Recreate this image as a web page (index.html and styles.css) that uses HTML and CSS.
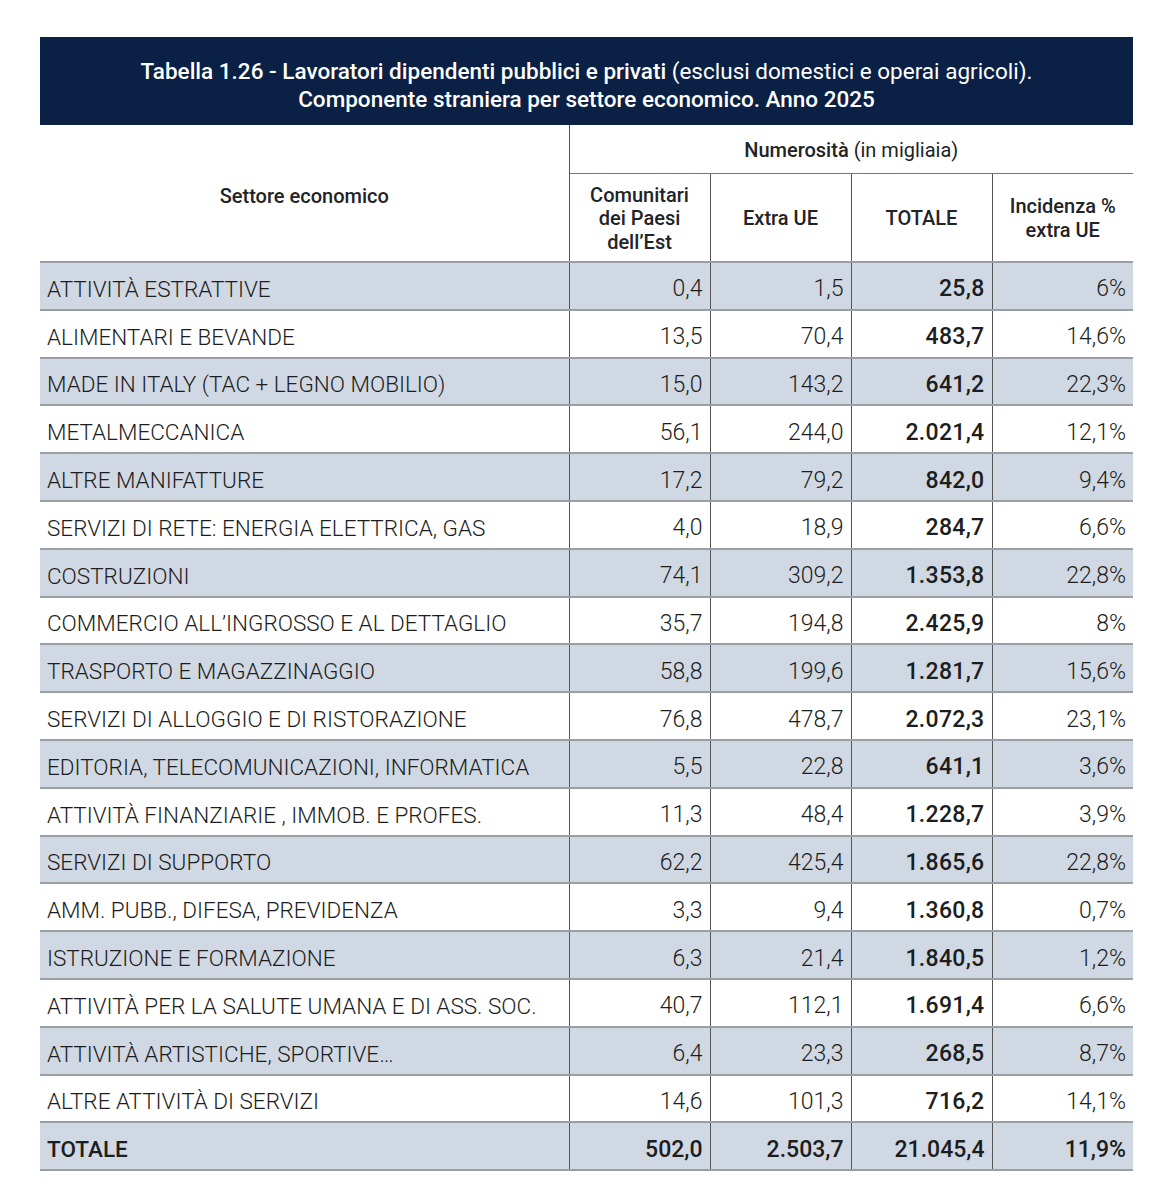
FILE: index.html
```html
<!DOCTYPE html>
<html lang="it">
<head>
  <meta charset="UTF-8" />
  <title>Tabella 1.26</title>
  <link rel="stylesheet" href="styles.css">
</head>
<body>
  <div class="page">
    <div class="caption">
      <div><b>Tabella 1.26 - Lavoratori dipendenti pubblici e privati</b> (esclusi domestici e operai agricoli).</div>
      <div><b>Componente straniera per settore economico. Anno 2025</b></div>
    </div>
    <table class="data">
      <colgroup>
        <col class="c-label">
        <col class="c-num">
        <col class="c-num">
        <col class="c-num">
        <col class="c-num">
      </colgroup>
      <thead>
        <tr class="head-top">
          <th rowspan="2" class="settore">Settore economico</th>
          <th colspan="4" class="group"><b>Numerosità</b> (in migliaia)</th>
        </tr>
        <tr class="head-sub">
          <th>Comunitari<br>dei Paesi<br>dell’Est</th>
          <th>Extra UE</th>
          <th>TOTALE</th>
          <th>Incidenza %<br>extra UE</th>
        </tr>
      </thead>
      <tbody>
        <tr><td>ATTIVITÀ ESTRATTIVE</td><td>0,4</td><td>1,5</td><td class="tot">25,8</td><td>6%</td></tr>
        <tr><td>ALIMENTARI E BEVANDE</td><td>13,5</td><td>70,4</td><td class="tot">483,7</td><td>14,6%</td></tr>
        <tr><td>MADE IN ITALY (TAC + LEGNO MOBILIO)</td><td>15,0</td><td>143,2</td><td class="tot">641,2</td><td>22,3%</td></tr>
        <tr><td>METALMECCANICA</td><td>56,1</td><td>244,0</td><td class="tot">2.021,4</td><td>12,1%</td></tr>
        <tr><td>ALTRE MANIFATTURE</td><td>17,2</td><td>79,2</td><td class="tot">842,0</td><td>9,4%</td></tr>
        <tr><td>SERVIZI DI RETE: ENERGIA ELETTRICA, GAS</td><td>4,0</td><td>18,9</td><td class="tot">284,7</td><td>6,6%</td></tr>
        <tr><td>COSTRUZIONI</td><td>74,1</td><td>309,2</td><td class="tot">1.353,8</td><td>22,8%</td></tr>
        <tr><td>COMMERCIO ALL’INGROSSO E AL DETTAGLIO</td><td>35,7</td><td>194,8</td><td class="tot">2.425,9</td><td>8%</td></tr>
        <tr><td>TRASPORTO E MAGAZZINAGGIO</td><td>58,8</td><td>199,6</td><td class="tot">1.281,7</td><td>15,6%</td></tr>
        <tr><td>SERVIZI DI ALLOGGIO E DI RISTORAZIONE</td><td>76,8</td><td>478,7</td><td class="tot">2.072,3</td><td>23,1%</td></tr>
        <tr><td>EDITORIA, TELECOMUNICAZIONI, INFORMATICA</td><td>5,5</td><td>22,8</td><td class="tot">641,1</td><td>3,6%</td></tr>
        <tr><td>ATTIVITÀ FINANZIARIE , IMMOB. E PROFES.</td><td>11,3</td><td>48,4</td><td class="tot">1.228,7</td><td>3,9%</td></tr>
        <tr><td>SERVIZI DI SUPPORTO</td><td>62,2</td><td>425,4</td><td class="tot">1.865,6</td><td>22,8%</td></tr>
        <tr><td>AMM. PUBB., DIFESA, PREVIDENZA</td><td>3,3</td><td>9,4</td><td class="tot">1.360,8</td><td>0,7%</td></tr>
        <tr><td>ISTRUZIONE E FORMAZIONE</td><td>6,3</td><td>21,4</td><td class="tot">1.840,5</td><td>1,2%</td></tr>
        <tr><td>ATTIVITÀ PER LA SALUTE UMANA E DI ASS. SOC.</td><td>40,7</td><td>112,1</td><td class="tot">1.691,4</td><td>6,6%</td></tr>
        <tr><td>ATTIVITÀ ARTISTICHE, SPORTIVE…</td><td>6,4</td><td>23,3</td><td class="tot">268,5</td><td>8,7%</td></tr>
        <tr><td>ALTRE ATTIVITÀ DI SERVIZI</td><td>14,6</td><td>101,3</td><td class="tot">716,2</td><td>14,1%</td></tr>
        <tr class="total"><td>TOTALE</td><td>502,0</td><td>2.503,7</td><td>21.045,4</td><td>11,9%</td></tr>
      </tbody>
    </table>
  </div>
</body>
</html>
```

FILE: styles.css
```css
* {
  box-sizing: border-box;
}

body {
  margin: 0;
  background: #fff;
  font-family: Roboto, "Liberation Sans", sans-serif;
  color: #222326;
}

.page {
  width: 1093px;
  margin: 37px 0 0 40px;
}

.caption {
  background: #0b2045;
  color: #fff;
  height: 88px;
  padding-top: 20px;
  text-align: center;
  font-size: 22.5px;
  line-height: 28px;
  font-weight: 400;
}

.caption b {
  font-weight: 500;
}

.data {
  width: 1093px;
  border-collapse: collapse;
  table-layout: fixed;
}

.c-label {
  width: 529px;
}

.c-num {
  width: 141px;
}

th {
  font-weight: 500;
  font-size: 20px;
  line-height: 23.5px;
  color: #222326;
  text-align: center;
}

.settore {
  height: 137px;
  border-right: 1px solid #555;
  padding-top: 8px;
}

.group {
  height: 48px;
  padding-top: 4px;
  font-weight: 400;
  border-bottom: 1px solid #777;
}

.group b {
  font-weight: 500;
}

.head-sub th {
  height: 89px;
  padding-top: 4px;
  border-right: 1px solid #555;
}

.head-sub th:last-child {
  border-right: none;
}

thead tr:last-child th,
.settore {
  border-bottom: 2px solid #9a9ea6;
}

td {
  height: 47.8px;
  padding: 6px 7px 0 7px;
  font-size: 23px;
  font-weight: 300;
  color: #1c1d20;
  text-align: right;
  border-bottom: 2px solid #9a9ea6;
  border-right: 1px solid #555;
  white-space: nowrap;
}

td:first-child {
  text-align: left;
  font-size: 22.5px;
}

td:last-child {
  border-right: none;
}

tbody tr:nth-child(odd) {
  background: #d0d8e4;
}

.tot {
  font-weight: 500;
  letter-spacing: 0.3px;
}

.total td,
.total td:first-child {
  font-weight: 500;
}
```
